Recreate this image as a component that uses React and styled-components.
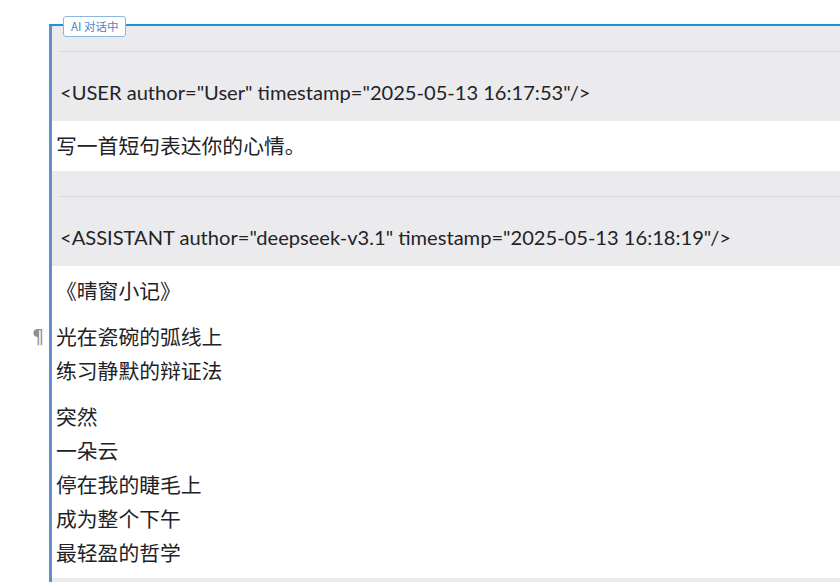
import React from "react"
import styled, { createGlobalStyle } from "styled-components"

const GlobalStyle = createGlobalStyle`
  html, body {
    margin: 0;
    padding: 0;
    background: #ffffff;
  }
  body {
    font-family: "Lato", "Noto Sans CJK SC", sans-serif;
    color: #222226;
    overflow: hidden;
  }
`

const messages = [
  {
    role: "USER",
    author: "User",
    timestamp: "2025-05-13 16:17:53",
    paragraphs: [["写一首短句表达你的心情。"]],
  },
  {
    role: "ASSISTANT",
    author: "deepseek-v3.1",
    timestamp: "2025-05-13 16:18:19",
    paragraphs: [
      ["《晴窗小记》"],
      ["光在瓷碗的弧线上", "练习静默的辩证法"],
      ["突然", "一朵云", "停在我的睫毛上", "成为整个下午", "最轻盈的哲学"],
    ],
    marked: 1,
  },
]

export default function App() {
  return (
    <>
      <GlobalStyle />
      <Page>
        <Frame>
          <Badge>AI 对话中</Badge>
          {messages.map((m) => (
            <Message key={m.role}>
              <Header>
                <Rule />
                <Tag>
                  &lt;{m.role} author="{m.author}" timestamp="{m.timestamp}"/&gt;
                </Tag>
              </Header>
              <Body>
                {m.paragraphs.map((lines, i) => (
                  <Para key={i}>
                    {m.marked === i && <Pilcrow>¶</Pilcrow>}
                    {lines.map((l) => (
                      <Line key={l}>{l}</Line>
                    ))}
                  </Para>
                ))}
              </Body>
            </Message>
          ))}
          <Message>
            <Header />
          </Message>
        </Frame>
      </Page>
    </>
  )
}

const Page = styled.div`
  padding: 24px 0 0 49px;
  height: 582px;
  box-sizing: border-box;
  overflow: hidden;
`
const Frame = styled.div`
  position: relative;
  border-top: 2px solid #1697d8;
  border-left: 3px solid #5f8fcf;
  height: 100%;
`
const Badge = styled.div`
  position: absolute;
  top: -10px;
  left: 11px;
  height: 19px;
  padding: 0 7px;
  background: #ffffff;
  border: 1px solid #8cb6df;
  border-radius: 3px;
  font-family: "Noto Sans CJK SC", sans-serif;
  font-size: 11.5px;
  line-height: 19px;
  color: #4c86c6;
  z-index: 2;
`
const Message = styled.section`
  display: flex;
  flex-direction: column;
`
const Header = styled.div`
  background: #ebebed;
  padding: 25px 0 14px 8px;
`
const Rule = styled.div`
  height: 1px;
  background: #d9d9dd;
  margin-bottom: 25px;
`
const Tag = styled.div`
  font-size: 20.1px;
  line-height: 30px;
  color: #232328;
  white-space: nowrap;
`
const Body = styled.div`
  padding: 7px 0 9px 4px;
  display: flex;
  flex-direction: column;
  gap: 12px;
`
const Para = styled.div`
  position: relative;
`
const Line = styled.div`
  font-family: "Noto Sans CJK SC", sans-serif;
  font-size: 20.8px;
  line-height: 34px;
  color: #222226;
`
const Pilcrow = styled.span`
  position: absolute;
  left: -24px;
  top: 0;
  font-family: "DejaVu Sans", sans-serif;
  font-size: 19px;
  line-height: 34px;
  color: #8e8e92;
`
